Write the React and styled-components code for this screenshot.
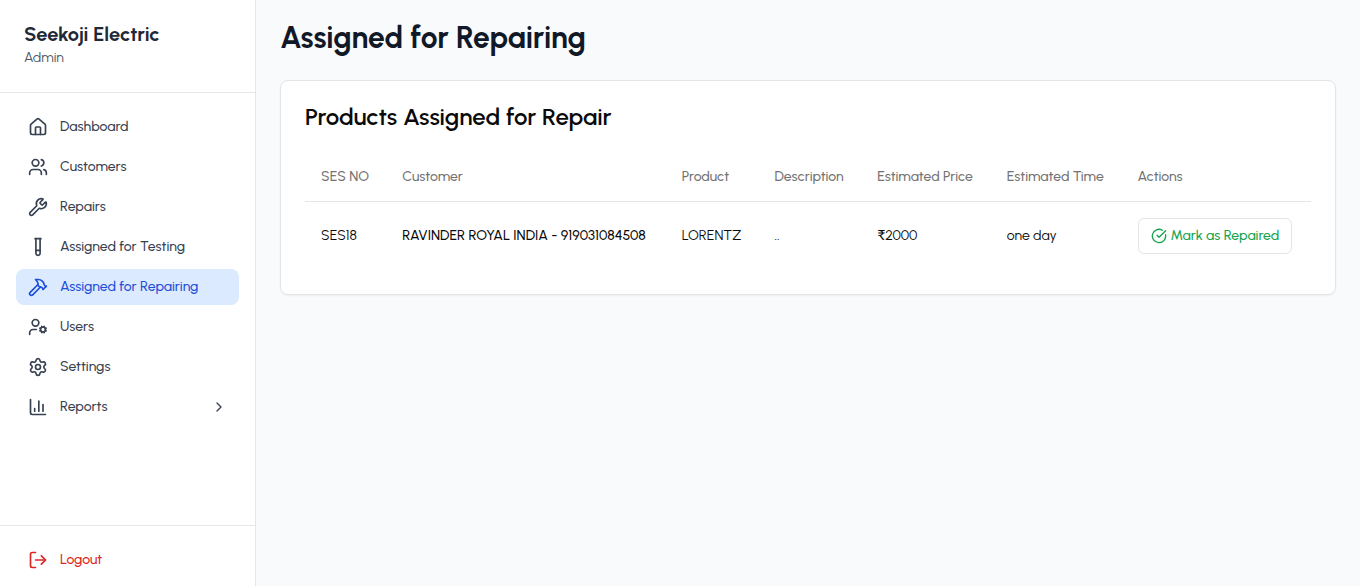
import React from 'react'
import styled, { createGlobalStyle } from "styled-components";
import {
  House,
  Users,
  Wrench,
  TestTube,
  Hammer,
  UserCog,
  Settings,
  ChartColumn,
  ChevronRight,
  LogOut,
  CircleCheckBig,
} from "lucide-react";

const links = [
  { label: "Dashboard", icon: House },
  { label: "Customers", icon: Users },
  { label: "Repairs", icon: Wrench },
  { label: "Assigned for Testing", icon: TestTube },
  { label: "Assigned for Repairing", icon: Hammer, active: true },
  { label: "Users", icon: UserCog },
  { label: "Settings", icon: Settings },
];

const products = [
  {
    ses: "SES18",
    customer: "RAVINDER ROYAL INDIA - 919031084508",
    product: "LORENTZ",
    description: "..",
    price: "₹2000",
    time: "one day",
  },
];

const App = () => {
  return (
    <Layout>
      <GlobalStyle />

      <Sidebar>
        <Brand>
          <BrandName>Seekoji Electric</BrandName>
          <Role>Admin</Role>
        </Brand>

        <Nav>
          {links.map(({ label, icon: Icon, active }) => (
            <NavItem key={label} href="#" $active={active}>
              <Icon size={20} />
              {label}
            </NavItem>
          ))}
          <NavItem as="button" type="button">
            <ChartColumn size={20} />
            <Grow>Reports</Grow>
            <ChevronRight size={16} />
          </NavItem>
        </Nav>

        <SidebarFooter>
          <NavItem as="button" type="button" $danger>
            <LogOut size={20} />
            Logout
          </NavItem>
        </SidebarFooter>
      </Sidebar>

      <Main>
        <PageTitle>Assigned for Repairing</PageTitle>

        <Card>
          <CardTitle>Products Assigned for Repair</CardTitle>
          <Table>
            <thead>
              <tr>
                <th>SES NO</th>
                <th>Customer</th>
                <th>Product</th>
                <th>Description</th>
                <th>Estimated Price</th>
                <th>Estimated Time</th>
                <th>Actions</th>
              </tr>
            </thead>
            <tbody>
              {products.map((item) => (
                <tr key={item.ses}>
                  <td>{item.ses}</td>
                  <CustomerCell>{item.customer}</CustomerCell>
                  <td>{item.product}</td>
                  <td>{item.description}</td>
                  <td>{item.price}</td>
                  <td>{item.time}</td>
                  <td>
                    <RepairedButton type="button">
                      <CircleCheckBig size={16} />
                      Mark as Repaired
                    </RepairedButton>
                  </td>
                </tr>
              ))}
            </tbody>
          </Table>
        </Card>
      </Main>
    </Layout>
  );
};

//css section

const GlobalStyle = createGlobalStyle`
* {
  box-sizing: border-box;
}

body {
  margin: 0;
  background: #f9fafb;
  color: #0a0a0a;
  font-family: Urbanist, Lato, "Liberation Sans", sans-serif;
  font-size: 14px;
  line-height: 20px;
  -webkit-font-smoothing: antialiased;
}

h1, h2, p {
  margin: 0;
}

button {
  font: inherit;
  cursor: pointer;
}
`;

const Layout = styled.div`
  display: flex;
  min-height: 100vh;
`;

const Sidebar = styled.aside`
  display: flex;
  flex-direction: column;
  flex: none;
  width: 256px;
  background: #fff;
  border-right: 1px solid #e5e7eb;
`;

const Brand = styled.div`
  padding: 20px 24px 24px;
  border-bottom: 1px solid #e5e7eb;
`;

const BrandName = styled.h2`
  font-size: 20px;
  line-height: 28px;
  font-weight: 700;
  color: #1f2937;
`;

const Role = styled.p`
  color: #4b5563;
`;

const Nav = styled.nav`
  display: flex;
  flex-direction: column;
  flex: 1;
  gap: 4px;
  padding: 16px;
`;

const NavItem = styled.a`
  display: flex;
  align-items: center;
  gap: 12px;
  width: 100%;
  padding: 8px 12px;
  border: none;
  border-radius: 8px;
  font-weight: 500;
  text-align: left;
  text-decoration: none;
  color: ${({ $active, $danger }) => ($danger ? "#dc2626" : $active ? "#1d4ed8" : "#374151")};
  background: ${({ $active }) => ($active ? "#dbeafe" : "transparent")};
`;

const Grow = styled.span`
  flex: 1;
`;

const SidebarFooter = styled.div`
  padding: 16px 16px 8px;
  border-top: 1px solid #e5e7eb;
`;

const Main = styled.main`
  flex: 1;
  min-width: 0;
  padding: 20px 24px;
`;

const PageTitle = styled.h1`
  font-size: 30px;
  line-height: 36px;
  font-weight: 700;
  color: #111827;
`;

const Card = styled.section`
  margin-top: 24px;
  padding: 24px;
  border: 1px solid #e5e5e5;
  border-radius: 8px;
  background: #fff;
  box-shadow: 0 1px 2px rgb(0 0 0 / 5%);
`;

const CardTitle = styled.h2`
  font-size: 24px;
  line-height: 24px;
  font-weight: 600;
  margin-bottom: 24px;
`;

const Table = styled.table`
  width: 100%;
  border-collapse: collapse;

  th {
    height: 48px;
    padding: 0 16px;
    text-align: left;
    font-weight: 500;
    color: #737373;
    border-bottom: 1px solid #e5e5e5;
  }

  td {
    padding: 16px;
    white-space: nowrap;
  }
`;

const CustomerCell = styled.td`
  font-weight: 500;
`;

const RepairedButton = styled.button`
  display: inline-flex;
  align-items: center;
  gap: 4px;
  height: 36px;
  padding: 0 12px;
  border: 1px solid #e5e5e5;
  border-radius: 6px;
  background: #fff;
  color: #16a34a;
  font-weight: 500;
`;

export default App;
